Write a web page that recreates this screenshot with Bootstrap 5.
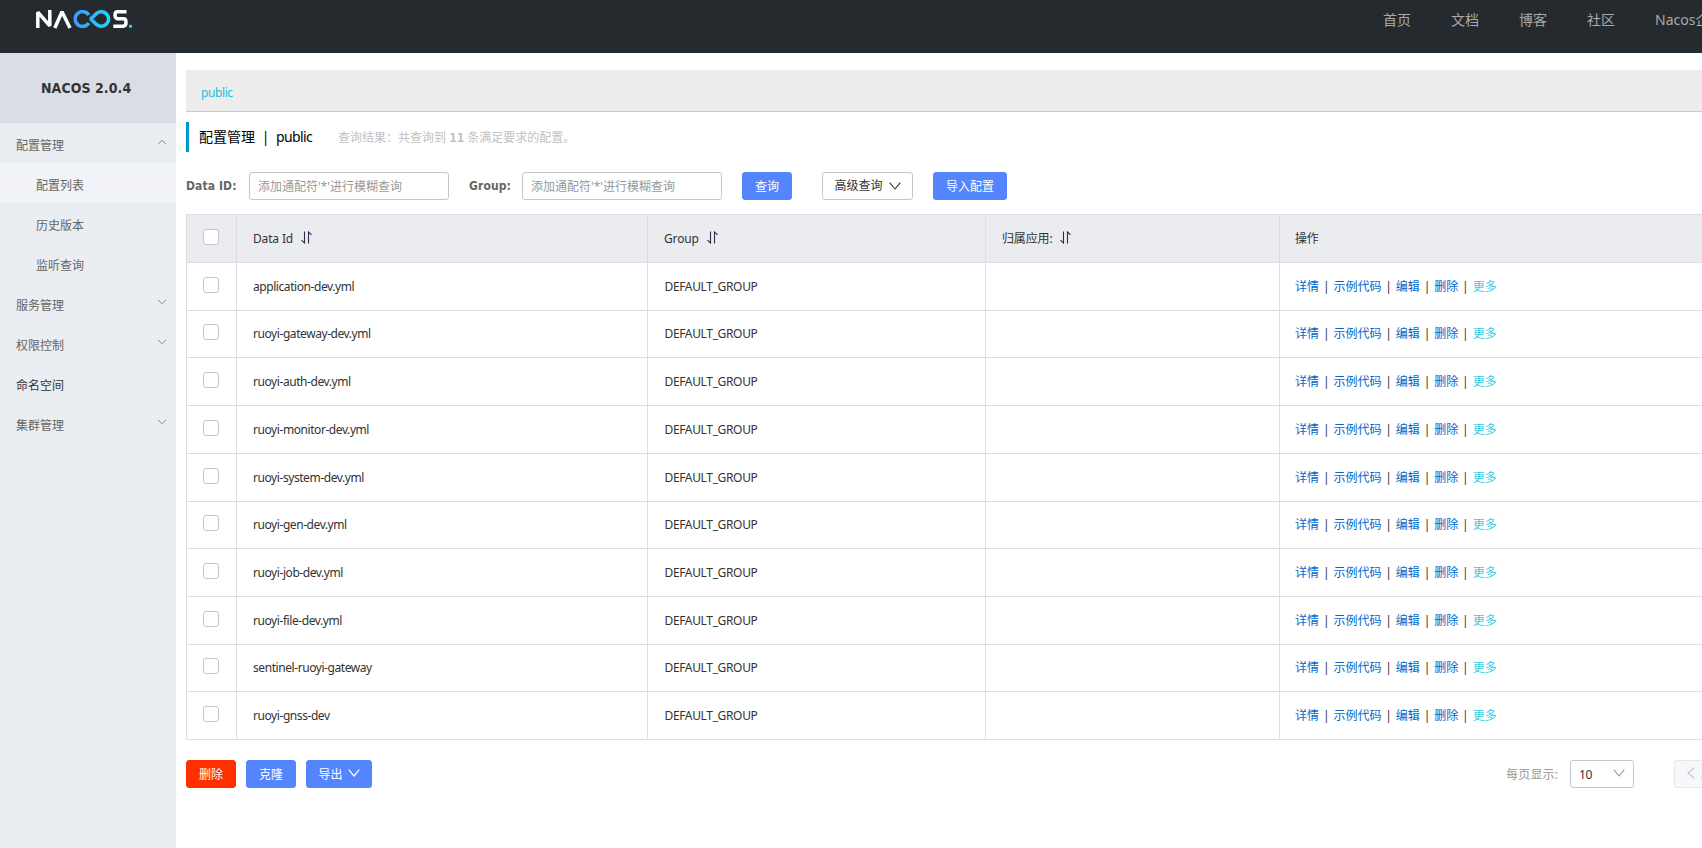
<!DOCTYPE html>
<html lang="zh-CN">
<head>
<meta charset="utf-8">
<title>Nacos</title>
<link rel="stylesheet" href="https://cdn.jsdelivr.net/npm/bootstrap@5.3.0/dist/css/bootstrap.min.css">
<style>
body{font-family:"Noto Sans","Noto Sans CJK SC",sans-serif;font-size:12px;line-height:18px;color:#333;height:848px;overflow:hidden;background:#fff}
a{text-decoration:none}
.top-bar{height:53px;background:#252a2f;padding:0 0 13px 36px}
.top-nav{width:319px;gap:40px;font-size:14px;white-space:nowrap}
.top-nav a{color:#a8aaac}
.side{width:176px;background:#eaedf2;flex:none}
.side-title{height:70px;background:#d9dde5;font:bold 14px/70px "DejaVu Sans Condensed","DejaVu Sans",sans-serif;padding-left:41px;letter-spacing:.06px}
.side a{height:40px;padding:6px 9px 0 16px;color:#666}
.side a.sub{padding-left:36px}
.side a.on{background:#f1f3f8}
.side a.solo{color:#333}
.side svg{margin-top:-9px}
.main-area{padding:17px 0 0 10px;min-width:0;width:1526px;overflow:hidden}
.ns-bar{height:42px;background:#ededed;border-bottom:1px solid #ccc;padding:4px 0 0 15px}
.ns-bar a{color:#1fbcdc;letter-spacing:-.4px}
.page-title{height:30px;margin-top:10px;border-left:3px solid #09c;padding-left:10px;font-size:14px;color:#000;white-space:pre}
.hint{font-size:12px;color:#c2c2c2;padding-top:2px}
.bold{font-family:"DejaVu Sans Condensed","DejaVu Sans","Noto Sans CJK SC",sans-serif;font-weight:bold}
.filters{margin-top:20px;height:28px}
.filters label{color:#666;font:bold 12px/29px "DejaVu Sans Condensed","DejaVu Sans",sans-serif;white-space:nowrap;letter-spacing:.1px}
.form-control{width:200px;height:28px;border-color:#c4c6cf;border-radius:3px;font-size:12px;padding:0 8px;flex:none}
.form-control::placeholder{color:#999;opacity:1}
.btn{height:28px;font-size:12px;line-height:26px;padding:0;border-radius:3px;flex:none;white-space:nowrap}
.btn-blue,.btn-blue:hover{background:#5584ff;color:#fff;border-color:#5584ff}
.btn-red,.btn-red:hover{background:#ff3000;color:#fff;border-color:#ff3000}
.btn-blue,.btn-red{padding-top:1px}
.btn-line{border-color:#c4c6cf;color:#333}
.grid-table{width:1540px;margin:14px 0 0;table-layout:fixed;border-collapse:collapse;color:#333}
.grid-table th,.grid-table td{border:1px solid #dcdee3;padding:1px 16px 0;font-weight:400;vertical-align:middle;height:48px;white-space:nowrap}
.grid-table thead th{background:#ebecf0;letter-spacing:-.15px}
.grid-table tr.low td{height:47px;padding-bottom:1px;padding-top:0}
.grid-table tr .ck,.grid-table tr.low .ck{padding:0 2px 0 0}
.grid-table .act{padding-left:15px}
.ck .form-check-input{display:block;width:16px;height:16px;margin:-4px auto 0;border:1px solid #c4c6cf;border-radius:3px}
.grid-table a{color:#06c}.grid-table a.more{color:#33cde5}
.grid-table i{font-style:normal;display:inline-block;width:14.4px;text-align:center}
.file{letter-spacing:-.43px}
.grp{letter-spacing:-.35px;padding-left:.5px}
.foot{margin-top:20px}
.pager-label{color:#999;margin-left:1133px;width:65px;white-space:nowrap;padding:2px 0 0 1px;letter-spacing:.2px}
.size-box{width:64px;padding:1px 8px 0 8px}
.prev{width:76px;margin-left:40px;background:#f7f8fa;border-color:#e6e7eb;color:#ccc}
</style>
</head>
<body>
<header class="top-bar d-flex align-items-center justify-content-between">
  <svg width="98" height="20" viewBox="0 0 98 20" fill="none" stroke-width="3.5">
    <defs><linearGradient id="g" gradientUnits="userSpaceOnUse" x1="36" y1="0" x2="76" y2="0"><stop offset="0" stop-color="#4690fb"/><stop offset="1" stop-color="#16dff8"/></linearGradient></defs>
    <path stroke="#fff" stroke-linejoin="bevel" d="M1.8 18V2.2L13.8 15.8V0"/>
    <path stroke="#fff" stroke-linejoin="bevel" d="M18.8 18L26 1.8L34 18"/>
    <path stroke="url(#g)" d="M52.8 5A7.4 7.4 0 1 0 52.8 13"/>
    <path stroke="url(#g)" stroke-linejoin="bevel" d="M54.6 9L60.4 3.6A7.3 7.3 0 1 1 60.4 14.4Z"/>
    <path stroke="#fff" d="M90.5 1.8H81.6Q79 1.8 79 4.9T81.6 8.8H87.6Q90 8.8 90 12.5T87 16.2H77.3"/>
    <rect x="93" y="14.8" width="3" height="3" rx=".7" fill="#16dff8"/>
  </svg>
  <nav class="top-nav d-flex"><a href="#">首页</a><a href="#">文档</a><a href="#">博客</a><a href="#">社区</a><a href="#">Nacos企业版</a></nav>
</header>
<div class="d-flex" style="height:795px">
  <aside class="side">
    <div class="side-title">NACOS 2.0.4</div>
    <nav class="d-flex flex-column">
      <a href="#" class="d-flex align-items-center justify-content-between">配置管理<svg width="10" height="6" fill="none" stroke="#888"><path d="M1 5.2L5 1.2L9 5.2"/></svg></a>
      <a href="#" class="sub on d-flex align-items-center">配置列表</a>
      <a href="#" class="sub d-flex align-items-center">历史版本</a>
      <a href="#" class="sub d-flex align-items-center">监听查询</a>
      <a href="#" class="d-flex align-items-center justify-content-between">服务管理<svg width="10" height="6" fill="none" stroke="#888"><path d="M1 .8L5 4.8L9 .8"/></svg></a>
      <a href="#" class="d-flex align-items-center justify-content-between">权限控制<svg width="10" height="6" fill="none" stroke="#888"><path d="M1 .8L5 4.8L9 .8"/></svg></a>
      <a href="#" class="solo d-flex align-items-center">命名空间</a>
      <a href="#" class="d-flex align-items-center justify-content-between">集群管理<svg width="10" height="6" fill="none" stroke="#888"><path d="M1 .8L5 4.8L9 .8"/></svg></a>
    </nav>
  </aside>
  <main class="main-area">
    <div class="ns-bar d-flex align-items-center"><a href="#">public</a></div>
    <div class="page-title d-flex align-items-center"><span>配置管理</span><span style="width:21px;text-align:center">|</span><span style="width:62px;letter-spacing:-.6px">public</span><span class="hint">查询结果：共查询到 <span class="bold">11</span> 条满足要求的配置。</span></div>
    <form class="filters d-flex">
      <label style="width:63px">Data ID:</label><input class="form-control" placeholder="添加通配符'*'进行模糊查询">
      <label style="width:53px;margin-left:20px">Group:</label><input class="form-control" placeholder="添加通配符'*'进行模糊查询">
      <button type="button" class="btn btn-blue" style="width:50px;margin-left:20px">查询</button>
      <button type="button" class="btn btn-line d-flex align-items-center justify-content-center" style="width:91px;margin-left:30px;gap:6px;padding-bottom:1px">高级查询<svg width="12" height="8" fill="none" stroke="#333" stroke-width="1.1"><path d="M.7 .7L6 7L11.3 .7"/></svg></button>
      <button type="button" class="btn btn-blue" style="width:74px;margin-left:20px">导入配置</button>
    </form>
    <table class="grid-table">
      <colgroup><col style="width:50px"><col style="width:411px"><col style="width:338px"><col style="width:294px"><col></colgroup>
      <thead><tr><th class="ck"><input type="checkbox" class="form-check-input"></th><th class="sortable">Data Id</th><th class="sortable">Group</th><th class="sortable">归属应用:</th><th class="act">操作</th></tr></thead>
      <tbody id="rows"></tbody>
    </table>
    <div class="foot d-flex align-items-center" style="width:1600px">
      <button class="btn btn-red" style="width:50px">删除</button>
      <button class="btn btn-blue" style="width:50px;margin-left:10px">克隆</button>
      <button class="btn btn-blue d-flex align-items-center justify-content-center" style="width:66px;margin-left:10px;gap:5px;padding-top:2px">导出<svg width="12" height="8" fill="none" stroke="#fff" stroke-width="1.2" style="margin-top:-4px"><path d="M.7 .7L6 7L11.3 .7"/></svg></button>
      <span class="pager-label">每页显示:</span>
      <button class="btn btn-line size-box d-flex align-items-center justify-content-between"><span style="letter-spacing:-.3px">10</span><svg width="12" height="8" fill="none" stroke="#999" stroke-width="1.1" style="margin-top:-4px"><path d="M.7 .7L6 7L11.3 .7"/></svg></button>
      <button class="btn prev d-flex align-items-center" style="padding-left:12px;gap:5px"><svg width="8" height="12" fill="none" stroke="#c4c6cf" stroke-width="1.2" style="margin-top:-2px"><path d="M7.3 .7L1 6L7.3 11.3"/></svg>上一页</button>
    </div>
  </main>
</div>
<script src="https://cdn.jsdelivr.net/npm/bootstrap@5.3.0/dist/js/bootstrap.bundle.min.js"></script>
<script>
const names = ['application-dev.yml','ruoyi-gateway-dev.yml','ruoyi-auth-dev.yml','ruoyi-monitor-dev.yml','ruoyi-system-dev.yml','ruoyi-gen-dev.yml','ruoyi-job-dev.yml','ruoyi-file-dev.yml','sentinel-ruoyi-gateway','ruoyi-gnss-dev'];
const shortRows = [1, 5, 8];
document.getElementById('rows').innerHTML = names.map((n, i) =>
  `<tr class="${shortRows.includes(i) ? 'low' : ''}"><td class="ck"><input type="checkbox" class="form-check-input"></td><td><span class="file">${n}</span></td><td><span class="grp">DEFAULT_GROUP</span></td><td></td><td class="act"><a href="#">详情</a><i>|</i><a href="#">示例代码</a><i>|</i><a href="#">编辑</a><i>|</i><a href="#">删除</a><i>|</i><a href="#" class="more">更多</a></td></tr>`).join('');
document.querySelectorAll('.sortable').forEach(th => th.insertAdjacentHTML('beforeend',
  '<svg width="11" height="13" viewBox="0 0 11 13" fill="none" stroke="#3a2848" stroke-width="1.1" style="margin:-4px 0 0 8px"><path d="M3.5 .5V12L.5 9.2M7.5 12.5V1L10.5 3.8"/></svg>'));
</script>
</body>
</html>
